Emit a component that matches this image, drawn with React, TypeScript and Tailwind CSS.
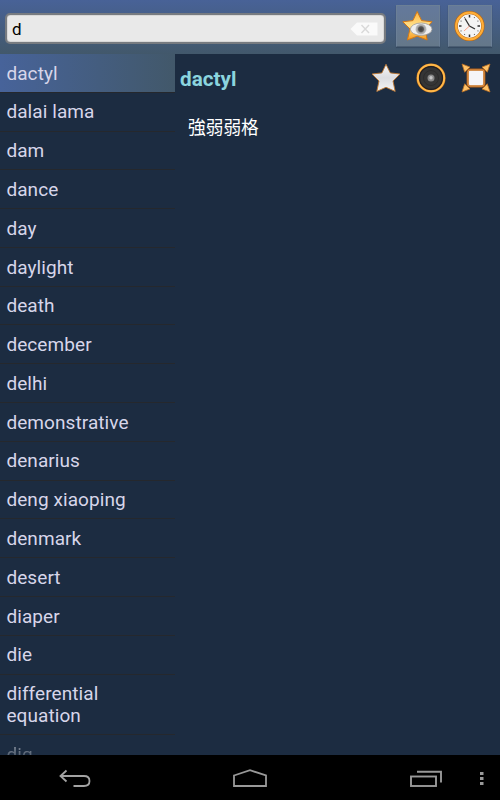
const words = [
  "dactyl",
  "dalai lama",
  "dam",
  "dance",
  "day",
  "daylight",
  "death",
  "december",
  "delhi",
  "demonstrative",
  "denarius",
  "deng xiaoping",
  "denmark",
  "desert",
  "diaper",
  "die",
  "differential equation",
  "dig",
]

const clockMarks = [30, 60, 120, 150, 210, 240, 300, 330]

function FavoritesIcon() {
  return (
    <svg width="32" height="32" viewBox="0 0 32 32">
      <defs>
        <linearGradient id="gold" x1="0" y1="0" x2="0" y2="1">
          <stop offset="0" stopColor="#ffb640" />
          <stop offset="0.5" stopColor="#ffe08a" />
          <stop offset="1" stopColor="#f79a1c" />
        </linearGradient>
        <radialGradient id="iris">
          <stop offset="0" stopColor="#3c3c3c" />
          <stop offset="0.45" stopColor="#555555" />
          <stop offset="0.65" stopColor="#a0a0a0" />
          <stop offset="1" stopColor="#c4c4c4" />
        </radialGradient>
      </defs>
      <path
        d="M15.2 1.5 L19.6 10.6 L30 11.8 L23 19 L25.2 30 L15.2 26.2 L5.4 30 L8 19 L0.8 11.8 L10.9 10.6 Z"
        fill="url(#gold)"
        stroke="#d57914"
        strokeWidth="1"
        strokeLinejoin="round"
      />
      <ellipse cx="19.2" cy="19.2" rx="10.8" ry="6.2" fill="#eeeeee" stroke="#9a9a9a" strokeWidth="0.8" />
      <circle cx="19" cy="19.2" r="5.5" fill="url(#iris)" />
    </svg>
  )
}

function HistoryIcon() {
  return (
    <svg width="32" height="32" viewBox="0 0 32 32">
      <circle cx="15.5" cy="16" r="13.4" fill="#f4f4f4" stroke="#b66718" strokeWidth="3.4" />
      <circle cx="15.5" cy="16" r="13.3" fill="none" stroke="#ffae37" strokeWidth="2.3" />
      {clockMarks.map(angle => (
        <circle key={angle} cx="15.5" cy="6.2" r="0.6" fill="#666666" transform={`rotate(${angle} 15.5 16)`} />
      ))}
      <path d="M15.5 5v2.5M15.5 24.5V27M5 16h2.5M23.5 16H26" stroke="#333333" strokeWidth="1.5" />
      <path d="M11 8.5 L15.5 16 L21 19" fill="none" stroke="#333333" strokeWidth="1.3" />
      <path d="M15.5 16 L10 21" stroke="#ff9b80" strokeWidth="0.9" />
    </svg>
  )
}

function StarIcon() {
  return (
    <svg width="30" height="30" viewBox="0 0 30 30">
      <defs>
        <linearGradient id="silver" x1="0" y1="0" x2="0" y2="1">
          <stop offset="0" stopColor="#f7f7f7" />
          <stop offset="0.5" stopColor="#dcdde1" />
          <stop offset="1" stopColor="#f4f4f4" />
        </linearGradient>
      </defs>
      <path
        d="M15 1.3 L19.3 9.9 L29 11 L22 18 L24.2 28.4 L15 24.3 L5.8 28.4 L8 18 L1 11 L10.9 9.9 Z"
        fill="url(#silver)"
        stroke="#bd762f"
        strokeWidth="0.9"
        strokeLinejoin="round"
      />
    </svg>
  )
}

function SpeakerIcon() {
  return (
    <svg width="30" height="30" viewBox="0 0 30 30">
      <circle cx="15" cy="15" r="13.2" fill="#353535" stroke="#bd6d19" strokeWidth="2.8" />
      <circle cx="15" cy="15" r="13.2" fill="none" stroke="#ffb849" strokeWidth="1.9" />
      <circle cx="15" cy="15" r="11.4" fill="none" stroke="#201f22" strokeWidth="1.2" />
      <circle cx="15" cy="15" r="7.5" fill="none" stroke="#292929" strokeWidth="0.8" />
      <circle cx="15" cy="15" r="3.5" fill="#888888" />
      <circle cx="15" cy="14.8" r="1.7" fill="#c5c5c5" />
    </svg>
  )
}

function FullscreenIcon() {
  return (
    <svg width="30" height="30" viewBox="0 0 30 30">
      <g fill="#ffc267" stroke="#b86d21" strokeWidth="0.8" strokeLinejoin="round">
        <path d="M1 1 L9 4 L3.7 9.2 Z" />
        <path d="M29 1 L21 4 L26.3 9.2 Z" />
        <path d="M1 29 L9 26 L3.7 20.8 Z" />
        <path d="M29 29 L21 26 L26.3 20.8 Z" />
      </g>
      <rect x="6.7" y="6.7" width="16.6" height="16.6" rx="2.5" fill="#f5f5f8" stroke="#af5f18" strokeWidth="2.2" />
      <rect x="7" y="7" width="16" height="16" rx="2" fill="none" stroke="#eca45a" strokeWidth="0.9" />
    </svg>
  )
}

function SearchBar() {
  return (
    <header className="flex h-[54px] shrink-0 items-start bg-linear-to-b from-[#486297] to-[#42586b] pl-[5px]">
      <div className="mt-[13px] flex h-[31px] w-[381px] items-center justify-between rounded-[5px] border-2 border-[#777b80] bg-[#e9e9e9] pr-[6px] pl-[5px] shadow-[inset_0_0_1px_#444]">
        <span className="text-[17px] leading-5 text-black">d</span>
        <svg width="28" height="14" viewBox="0 0 28 14">
          <path d="M0.5 7 L7 0.5 H27.5 V13.5 H7 Z" fill="#fafafa" />
          <path d="M11.5 3 L19 11 M19 3 L11.5 11" stroke="#d9d9d9" strokeWidth="1.4" />
        </svg>
      </div>
      <button className="mt-[5px] ml-[10px] flex h-[42px] w-[44px] items-center justify-center border border-[#6b7f96] border-b-[#4b5e73] bg-linear-to-b from-[#64799b] to-[#65788a] shadow-[0_1px_1px_#35495f]">
        <FavoritesIcon />
      </button>
      <button className="mt-[5px] ml-[8px] flex h-[42px] w-[44px] items-center justify-center border border-[#6b7f96] border-b-[#4b5e73] bg-linear-to-b from-[#64799b] to-[#65788a] shadow-[0_1px_1px_#35495f]">
        <HistoryIcon />
      </button>
    </header>
  )
}

function WordList() {
  return (
    <ul className="h-full w-[175px] shrink-0 overflow-hidden text-[19px] leading-[22px] tracking-[0.08px] text-[#d7d6ea]">
      {words.map((word, index) => (
        <li
          key={word}
          className={
            index === 0
              ? "border-b border-[#25282d] bg-linear-to-r from-[#47639a] to-[#42586a] pt-[8.8px] pr-4 pb-[7px] pl-[6.4px]"
              : index === words.length - 1
                ? "bg-linear-to-b from-[#c0c4cf] to-[#394859] to-[26px] bg-clip-text pt-[8.4px] pl-[6.4px] text-transparent"
                : "border-b border-[#25282d] pt-[8.6px] pr-4 pb-[7.2px] pl-[6.4px]"
          }
        >
          {word}
        </li>
      ))}
    </ul>
  )
}

function Definition() {
  return (
    <main className="flex-1">
      <div className="flex h-[48px] items-center pr-[9.5px] pl-[5px]">
        <h1 className="mr-auto pt-[2px] text-[20.7px] leading-6 font-bold text-[#8bd5df]">dactyl</h1>
        <div className="flex gap-[15px]">
          <StarIcon />
          <SpeakerIcon />
          <FullscreenIcon />
        </div>
      </div>
      <p className="pt-[11px] pl-[13px] font-['Noto_Sans_CJK_JP',sans-serif] text-[17.7px] leading-[26px] text-white">
        強弱弱格
      </p>
    </main>
  )
}

function NavigationBar() {
  return (
    <nav className="flex h-[45px] shrink-0 items-center bg-black pl-[58px]">
      <svg width="34" height="20" viewBox="0 0 34 20" fill="none" stroke="#a3a3a3" strokeWidth="1.8">
        <path d="M8.5 2.5 L2.5 8 L8.5 13.5 M3 8 H26 C30 8 31.5 9.5 31.5 13 C31.5 16.7 30 18 26 18 H15.5" />
      </svg>
      <svg className="ml-[140px]" width="36" height="20" viewBox="0 0 36 20" fill="none" stroke="#999999" strokeWidth="1.8">
        <path d="M2 7.5 L18 2.2 L34 7.5 V18 H2 Z" />
      </svg>
      <svg className="ml-[141px]" width="34" height="20" viewBox="0 0 34 20" fill="none" stroke="#999999" strokeWidth="1.9">
        <path d="M8 3.8 H32 V14.5" />
        <rect x="2" y="8.5" width="25" height="9.5" />
      </svg>
      <svg className="ml-[36px]" width="6" height="16" viewBox="0 0 6 16" fill="#999999">
        <path d="M1 2h3.5v3H1zM1 7h3.5v3H1zM1 12h3.5v3H1z" />
      </svg>
    </nav>
  )
}

export default function App() {
  return (
    <div className="flex h-[800px] w-[500px] flex-col overflow-hidden bg-[#1c2c41] font-[Roboto,'Liberation_Sans',sans-serif]">
      <SearchBar />
      <div className="flex min-h-0 flex-1">
        <WordList />
        <Definition />
      </div>
      <NavigationBar />
    </div>
  )
}
